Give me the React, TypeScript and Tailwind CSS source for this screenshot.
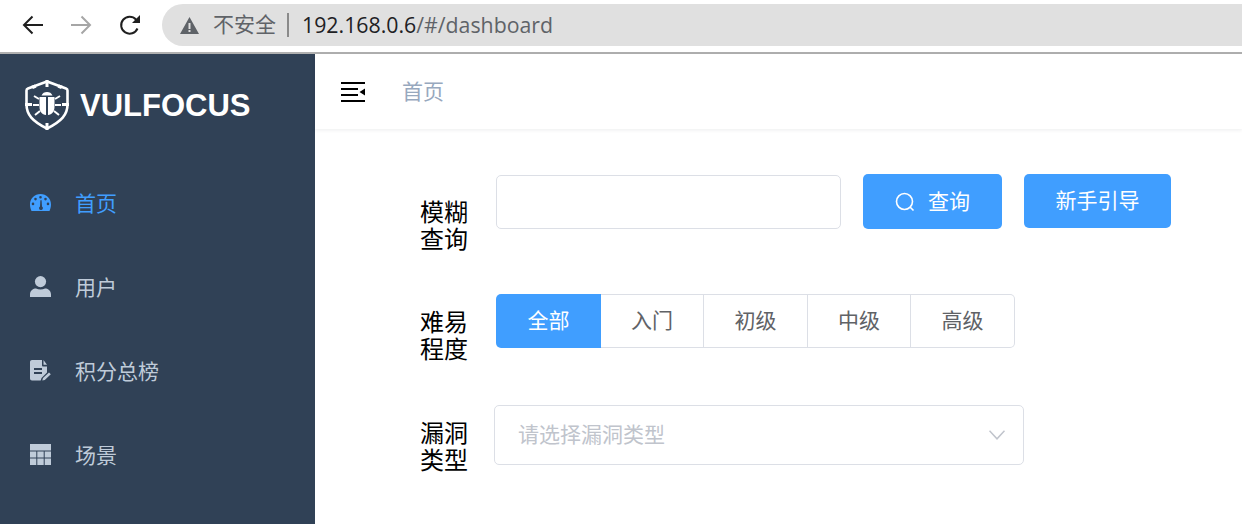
import React from 'react';

const menu = [
  { label: '首页', active: true, icon: 'gauge' },
  { label: '用户', active: false, icon: 'user' },
  { label: '积分总榜', active: false, icon: 'doc' },
  { label: '场景', active: false, icon: 'table' },
];

const levels = [
  { label: '全部', width: 'w-[105px]', active: true },
  { label: '入门', width: 'w-[103px]', active: false },
  { label: '初级', width: 'w-[104px]', active: false },
  { label: '中级', width: 'w-[103px]', active: false },
  { label: '高级', width: 'w-[104px]', active: false },
];

const MenuIcon: React.FC<{ name: string }> = ({ name }) => {
  if (name === 'gauge') {
    return (
      <svg width="21" height="17" viewBox="0 0 21 17" fill="currentColor">
        <path
          fillRule="evenodd"
          d="M10.5 0C4.7 0 0 4.6 0 10.4c0 2.4.7 4.6 1.5 6.6h18c.8-2 1.5-4.2 1.5-6.6C21 4.6 16.3 0 10.5 0zM10.5 2a1.3 1.3 0 1 1 0 2.6 1.3 1.3 0 0 1 0-2.6zM5.5 3.8a1.3 1.3 0 1 1 0 2.6 1.3 1.3 0 0 1 0-2.6zM15.5 3.8a1.3 1.3 0 1 1 0 2.6 1.3 1.3 0 0 1 0-2.6zM3 8.6a1.3 1.3 0 1 1 0 2.6 1.3 1.3 0 0 1 0-2.6zM18 8.6a1.3 1.3 0 1 1 0 2.6 1.3 1.3 0 0 1 0-2.6zM11.6 6.2l.4 6.2a2 2 0 0 1-.6 3.6 2 2 0 0 1-2.4-2c0-.7.4-1.3 1-1.6l.4-6.2h1.2z"
        />
      </svg>
    );
  }
  if (name === 'user') {
    return (
      <svg width="21" height="21" viewBox="0 0 21 21" fill="currentColor">
        <circle cx="10.5" cy="5.6" r="5.6" />
        <path d="M0 21v-2.6C0 14.6 3.4 12.6 6 12.6c1.4.7 2.8 1 4.5 1s3.1-.3 4.5-1c2.6 0 6 2 6 5.8V21H0z" />
      </svg>
    );
  }
  if (name === 'doc') {
    return (
      <svg width="21" height="21" viewBox="0 0 21 21" fill="currentColor">
        <path
          fillRule="evenodd"
          d="M2 0h10v5.5c0 .5.4.9.9.9H17v6.1l-5.5 5.5-.8 2.5H2c-1.1 0-2-.9-2-2V2C0 .9.9 0 2 0zM4 8v2h8V8H4zM4 12v2h8v-2H4z"
        />
        <path d="M13.5 0L17 4.8h-3.5V0zM13 18l6-5.500 1.800 1.800-6 5.700-2.500.6.700-2.600z" />
      </svg>
    );
  }
  return (
    <svg width="21" height="21" viewBox="0 0 21 21" fill="currentColor">
      <path d="M0 0h21v6.500H0zM0 7.500h6.300v6H0zM7.300 7.500h6.400v6H7.300zM14.700 7.500H21v6h-6.300zM0 14.500h6.300V21H0zM7.300 14.500h6.400V21H7.300zM14.700 14.500H21V21h-6.300z" />
    </svg>
  );
};

const BugShield: React.FC = () => (
  <svg width="44" height="50" viewBox="0 0 44 50" fill="none">
    <path
      d="M22 1.500L3 8.500c-1 .4-1.500 1-1.500 2v14c0 10 6 17 20.500 24 14.500-7 20.500-14 20.500-24v-14c0-1-.5-1.600-1.500-2L22 1.500z"
      stroke="#fff"
      strokeWidth="2.600"
    />
    <path d="M20.500 0h3v7h-3zM20.500 43h3v7h-3zM0 23h7v3H0zM37 23h7v3h-7zM6 6l4-1.500 1.500 3-3.500 1.500zM38 6l-4-1.500-1.500 3 3.500 1.500z" fill="#fff" />
    <path
      d="M16.500 15.500c1-2.500 3-3.500 5.500-3.500s4.500 1 5.500 3.500h-11zM14.500 17h6.500v18c-4-.5-6.500-3.500-6.500-8v-10zM23 17h6.500v10c0 4.500-2.500 7.500-6.500 8V17z"
      fill="#fff"
    />
    <path d="M14 19l-5-3M30 19l5-3M14 25H8M30 25h6M15 31l-5 4M29 31l5 4" stroke="#fff" strokeWidth="2" />
  </svg>
);

const BrowserBar: React.FC = () => (
  <div className="flex h-[54px] items-start border-b-2 border-[#b0b0b0] bg-white pt-1">
    <div className="flex h-[42px] w-[162px] items-center">
      <svg className="ml-[22px]" width="21" height="20" viewBox="0 0 21 20" fill="none" stroke="#1f1f1f" strokeWidth="2">
        <path d="M21 10H2M10.500 1.500L2 10l8.500 8.500" />
      </svg>
      <svg className="ml-[28px]" width="21" height="20" viewBox="0 0 21 20" fill="none" stroke="#a6a6a6" strokeWidth="2">
        <path d="M0 10h19M10.500 1.500L19 10l-8.500 8.500" />
      </svg>
      <svg className="ml-[27px]" width="22" height="22" viewBox="0 0 22 22" fill="none" stroke="#1f1f1f" strokeWidth="2">
        <path d="M18.500 14.500a8.500 8.500 0 1 1-1.500-9L20 8" />
        <path d="M21 1v8h-8z" fill="#1f1f1f" stroke="none" />
      </svg>
    </div>
    <div className="flex h-[42px] flex-1 items-center rounded-l-[21px] bg-[#e0e0e0] pl-[18px] font-['Open_Sans','Noto_Sans_CJK_SC',sans-serif] text-[21px]">
      <svg width="19" height="17" viewBox="0 0 19 17">
        <path
          fillRule="evenodd"
          d="M9.500 0L19 17H0L9.500 0zM8.500 6v6h2V6h-2zM8.500 13v2h2v-2h-2z"
          fill="#5f6368"
        />
      </svg>
      <span className="ml-[14px] text-[#5f6368]">不安全</span>
      <span className="ml-[11px] h-[24px] w-[2px] bg-[#8a8a8a]" />
      <span className="ml-[13px] text-[21.3px] text-[#202124]">
        192.168.0.6<span className="text-[#5f6368]">/#/dashboard</span>
      </span>
    </div>
  </div>
);

const Sidebar: React.FC = () => (
  <aside className="w-[315px] shrink-0 bg-[#304156]">
    <div className="flex items-center pl-[25px] pt-[26px] text-white">
      <BugShield />
      <span className="ml-[11px] translate-y-px text-[31px] leading-[50px] font-bold">VULFOCUS</span>
    </div>
    <nav className="mt-[32px]">
      {menu.map((item) => (
        <div
          key={item.label}
          className={`flex h-[84px] items-center pl-[30px] text-[21px] ${item.active ? 'text-[#409eff]' : 'text-[#bfcbd9]'}`}
        >
          <span className="flex w-[21px] -translate-y-[2px] justify-center">
            <MenuIcon name={item.icon} />
          </span>
          <span className="ml-[24px]">{item.label}</span>
        </div>
      ))}
    </nav>
  </aside>
);

const FieldLabel: React.FC<{ text: string }> = ({ text }) => (
  <label className="block w-[48px] shrink-0 text-[24px] leading-[27px] text-black">{text}</label>
);

const App: React.FC = () => (
  <div className="h-[524px] w-[1242px] overflow-hidden bg-white font-['Liberation_Sans','Noto_Sans_CJK_SC',sans-serif]">
    <BrowserBar />
    <div className="flex h-[470px]">
      <Sidebar />
      <main className="min-w-0 flex-1">
        <header className="flex h-[75px] items-center pl-[26px] shadow-[0_1px_4px_rgba(0,21,41,0.08)]">
          <svg width="24" height="20" viewBox="0 0 24 20" fill="#000">
            <path d="M0 0h24v2H0zM0 6h17v2H0zM0 12h17v2H0zM0 18h24v2H0zM18.500 10l5.500-3.500v7z" />
          </svg>
          <span className="ml-[37px] text-[21px] text-[#97a8be]">首页</span>
        </header>

        <div className="pl-[105px] pt-[45px]">
          <div className="flex h-[55px]">
            <div className="pt-[25px]">
              <FieldLabel text="模糊查询" />
            </div>
            <input className="ml-[28px] mt-px h-[54px] w-[345px] rounded-[5px] border border-[#dcdfe6] bg-white" />
            <button className="ml-[22px] flex h-[55px] w-[139px] items-center justify-center rounded-[5px] bg-[#409eff] text-[21px] text-white">
              <svg width="20" height="20" viewBox="0 0 20 20" fill="none" stroke="#fff" strokeWidth="1.600">
                <circle cx="9.500" cy="9.500" r="8" />
                <path d="M15 15l3.500 3.500" />
              </svg>
              <span className="ml-[13px]">查询</span>
            </button>
            <button className="ml-[22px] h-[54px] w-[147px] rounded-[5px] bg-[#409eff] text-[21px] text-white">
              新手引导
            </button>
          </div>

          <div className="mt-[65px] flex h-[54px]">
            <div className="pt-[15px]">
              <FieldLabel text="难易程度" />
            </div>
            <div className="ml-[28px] flex h-[54px]">
              {levels.map((level, i) => (
                <div
                  key={level.label}
                  className={`flex items-center justify-center text-[21px] ${level.width} ${
                    level.active
                      ? 'rounded-l-[5px] bg-[#409eff] text-white'
                      : `border-y border-r border-[#dcdfe6] text-[#606266] ${i === levels.length - 1 ? 'rounded-r-[5px]' : ''}`
                  }`}
                >
                  {level.label}
                </div>
              ))}
            </div>
          </div>

          <div className="mt-[57px] flex h-[60px]">
            <div className="pt-[15px]">
              <FieldLabel text="漏洞类型" />
            </div>
            <div className="ml-[26px] flex h-[60px] w-[530px] items-center justify-between rounded-[5px] border border-[#dcdfe6] pl-[23px] pr-[18px]">
              <span className="text-[21px] text-[#c0c4cc]">请选择漏洞类型</span>
              <svg width="16" height="10" viewBox="0 0 16 10" fill="none" stroke="#c0c4cc" strokeWidth="1.500">
                <path d="M.5.800L8 8.800 15.500.800" />
              </svg>
            </div>
          </div>
        </div>
      </main>
    </div>
  </div>
);

export default App;
